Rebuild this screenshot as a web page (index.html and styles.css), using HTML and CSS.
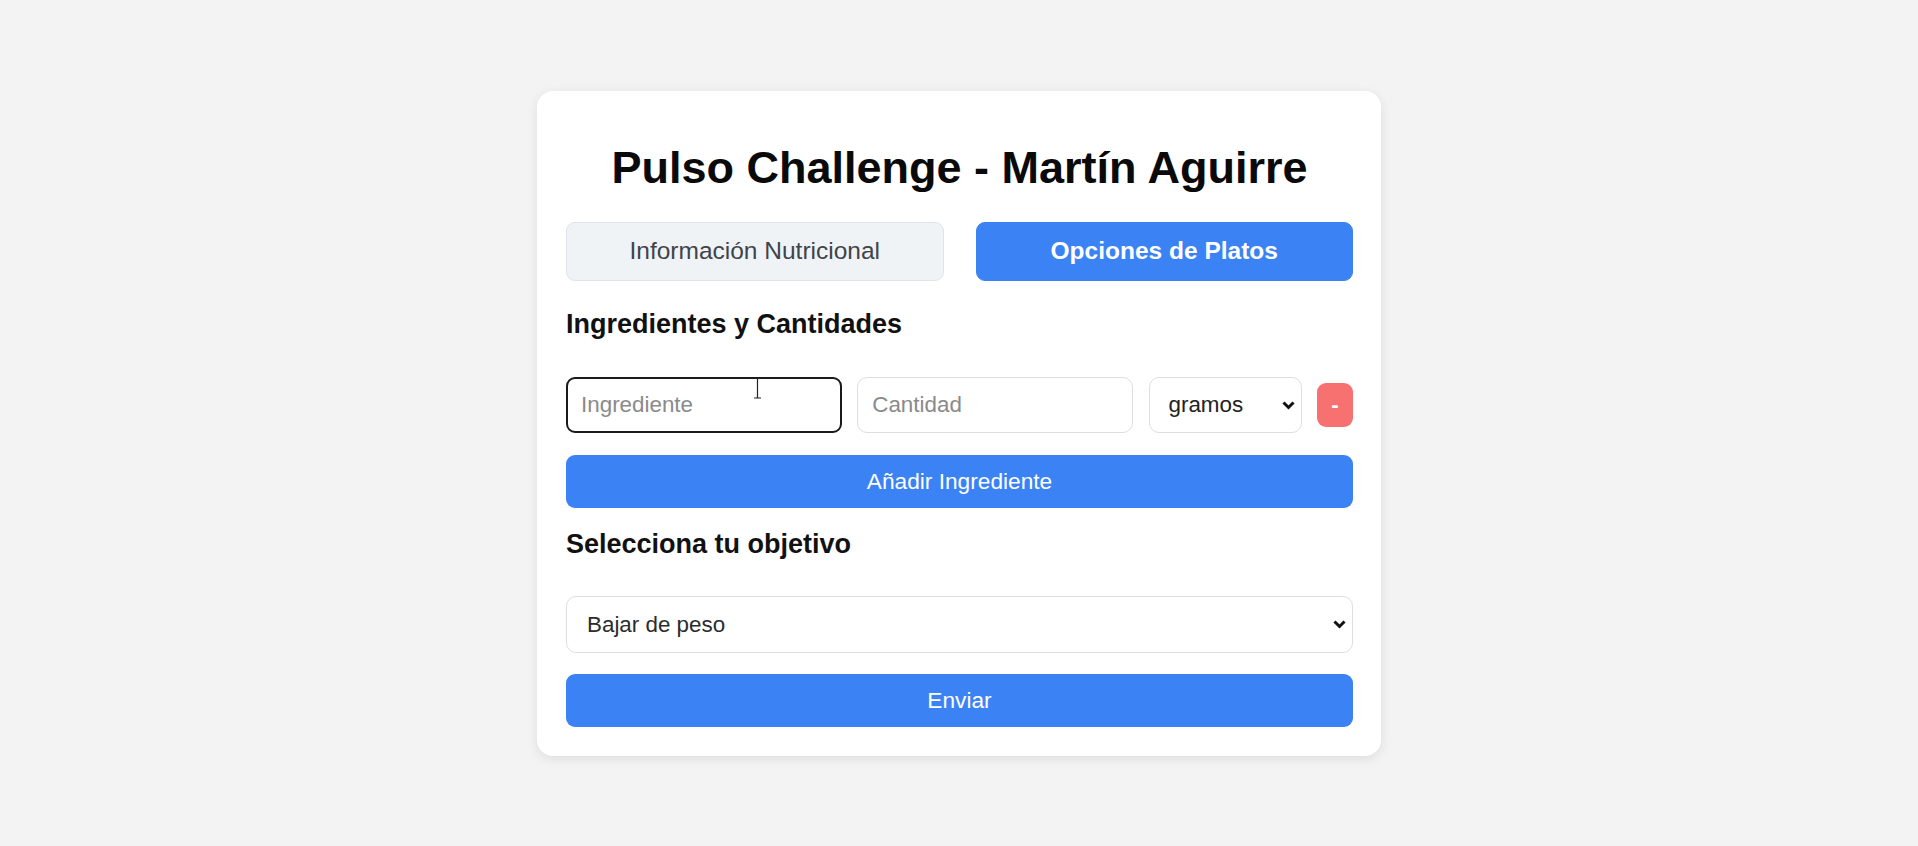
FILE: index.html
```html
<!DOCTYPE html>
<html lang="es">
<head>
<meta charset="utf-8">
<title>Pulso Challenge</title>
<link rel="stylesheet" href="styles.css">
</head>
<body>
<main class="card">
  <h1 class="title">Pulso Challenge - Martín Aguirre</h1>
  <div class="tabs">
    <button class="tab">Información Nutricional</button>
    <button class="tab tab-active">Opciones de Platos</button>
  </div>
  <h3 class="section-title section-first">Ingredientes y Cantidades</h3>
  <div class="ing-row">
    <div class="field field-focus">
      <input class="input input-focus" type="text" placeholder="Ingrediente">
      <svg class="cursor" width="9" height="22" viewBox="0 0 9 22"><path d="M1 1h2.5c.6 0 1 .4 1 1v18c0 .6.4 1 1 1H8M8 1H5.5c-.6 0-1 .4-1 1M4.5 20c0 .6-.4 1-1 1H1" fill="none" stroke="#222" stroke-width="1.2"/></svg>
    </div>
    <div class="field">
      <input class="input" type="text" placeholder="Cantidad">
    </div>
    <div class="select-wrap select-unit">
      <select class="select"><option>gramos</option></select>
      <svg class="chev" width="13" height="9" viewBox="0 0 13 9"><path d="M1.5 1.5l5 5 5-5" fill="none" stroke="#111" stroke-width="3"/></svg>
    </div>
    <button class="remove">-</button>
  </div>
  <button class="btn btn-add">Añadir Ingrediente</button>
  <h3 class="section-title section-second">Selecciona tu objetivo</h3>
  <div class="select-wrap select-goal">
    <select class="select select-big"><option>Bajar de peso</option></select>
    <svg class="chev" width="13" height="9" viewBox="0 0 13 9"><path d="M1.5 1.5l5 5 5-5" fill="none" stroke="#111" stroke-width="3"/></svg>
  </div>
  <button class="btn btn-send">Enviar</button>
</main>
</body>
</html>
```

FILE: styles.css
```css
* { box-sizing: border-box; }

html, body {
  margin: 0;
  padding: 0;
}

body {
  background: #f3f3f3;
  font-family: "Liberation Sans", Arial, sans-serif;
  min-height: 100vh;
  display: flex;
  align-items: center;
  justify-content: center;
}

.card {
  width: 844px;
  background: #ffffff;
  border-radius: 16px;
  box-shadow: 0 3px 12px rgba(0, 0, 0, 0.09);
  padding: 29px 28px 29px 29px;
  display: flex;
  flex-direction: column;
}

.title {
  margin: 23px 0 29px;
  font-size: 45px;
  line-height: 50px;
  font-weight: 700;
  color: #0a0a0a;
  text-align: center;
}

.tabs {
  display: flex;
  gap: 32px;
}

.tab {
  flex: 1;
  height: 59px;
  border-radius: 9px;
  border: 1px solid #dfe4ea;
  background: #f0f3f6;
  color: #3f444b;
  font-family: "Liberation Sans", Arial, sans-serif;
  font-size: 24.5px;
  padding: 0;
  cursor: pointer;
}

.tab-active {
  background: #3b82f4;
  border-color: #3b82f4;
  color: #ffffff;
  font-weight: 700;
}

.section-title {
  margin: 0;
  font-size: 27px;
  line-height: 30px;
  font-weight: 700;
  color: #111111;
}

.section-first { margin-top: 28px; margin-bottom: 38px; }
.section-second { margin-top: 21px; margin-bottom: 37px; }

.ing-row {
  display: flex;
  align-items: center;
  gap: 15.5px;
  height: 56px;
}

.field {
  flex: 1;
  position: relative;
  height: 56px;
}

.input {
  width: 100%;
  height: 100%;
  border: 1px solid #dedede;
  border-radius: 10px;
  background: #fff;
  padding: 0 14px;
  font-family: "Liberation Sans", Arial, sans-serif;
  font-size: 22.4px;
  color: #222;
  outline: none;
}

.input::placeholder { color: #8a8a8a; }

.input-focus {
  border: 2px solid #1a1a1a;
  border-radius: 9px;
  padding: 0 13px;
}

.cursor {
  position: absolute;
  left: 187px;
  top: 0px;
}

.select-wrap {
  position: relative;
}

.select-unit {
  width: 153px;
  height: 56px;
}

.select-goal {
  width: 100%;
  height: 57px;
}

.select {
  -webkit-appearance: none;
  appearance: none;
  width: 100%;
  height: 100%;
  border: 1px solid #dedede;
  border-radius: 10px;
  background: #fff;
  padding: 0 30px 0 19px;
  font-family: "Liberation Sans", Arial, sans-serif;
  font-size: 22.4px;
  color: #222;
  outline: none;
}

.select-big {
  padding-left: 20px;
  color: #2c2c2c;
}

.chev {
  position: absolute;
  right: 7px;
  top: 50%;
  margin-top: -4px;
  pointer-events: none;
}

.remove {
  width: 36px;
  height: 44px;
  flex: none;
  border: none;
  border-radius: 9px;
  background: #f87171;
  color: #fff;
  font-family: "Liberation Sans", Arial, sans-serif;
  font-size: 22px;
  font-weight: 700;
  padding: 0;
}

.btn {
  width: 100%;
  height: 53px;
  border: none;
  border-radius: 9px;
  background: #3b82f4;
  color: #fff;
  font-family: "Liberation Sans", Arial, sans-serif;
  font-size: 22.7px;
  padding: 0;
}

.btn-add { margin-top: 22px; }
.btn-send { margin-top: 21px; }
```
